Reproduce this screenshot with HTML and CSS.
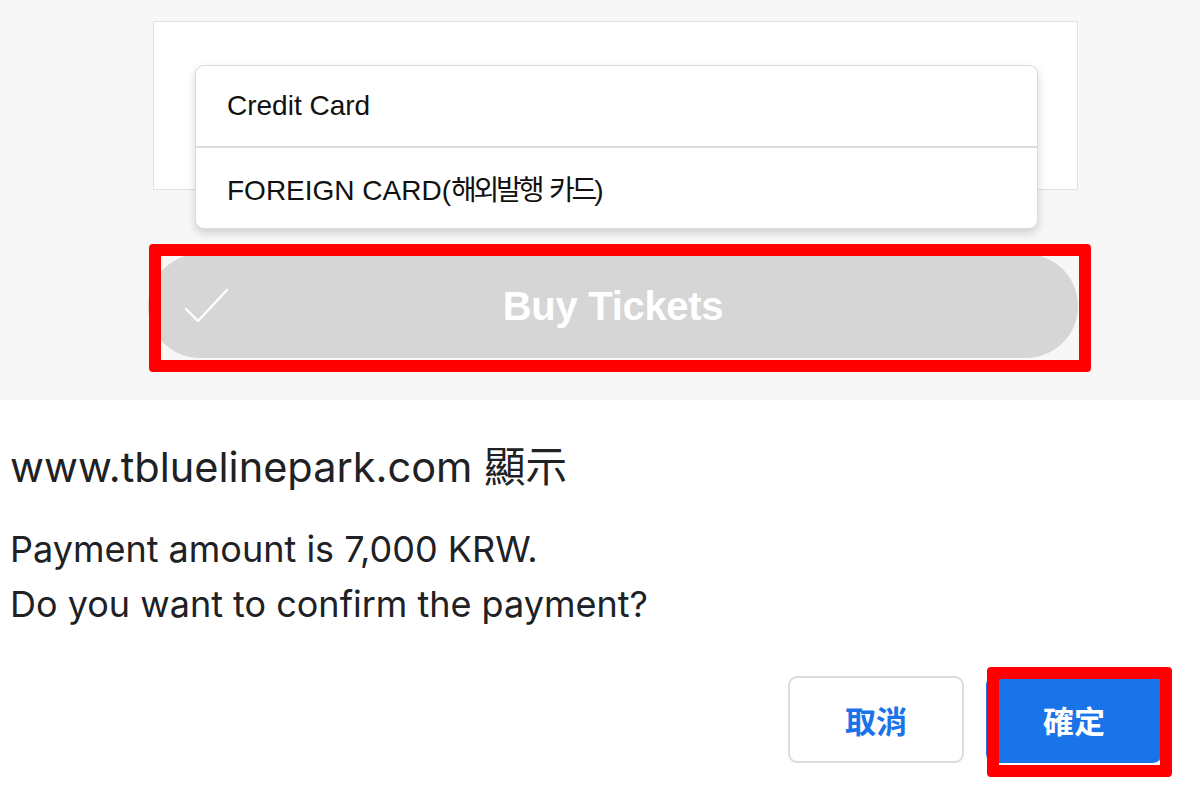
FILE: index.html
```html
<!DOCTYPE html>
<html>
<head>
<meta charset="utf-8">
<link rel="stylesheet" href="styles.css">
</head>
<body>
<section class="top">
  <div class="card">
    <ul class="menu">
      <li class="menu-item"><span>Credit Card</span></li>
      <li class="menu-item"><span>FOREIGN CARD(<span class="ko">해외발행</span> <span class="ko">카드</span>)</span></li>
    </ul>
  </div>
  <div class="buy">
    <svg class="check" width="48" height="40" viewBox="0 0 48 40"><polyline points="3,21 15,33 44,2" fill="none" stroke="#ffffff" stroke-width="2.4" stroke-linecap="round" stroke-linejoin="round"/></svg>
    <span class="buy-label">Buy Tickets</span>
    <div class="mark mark-buy"></div>
  </div>
</section>
<section class="dialog">
  <h1 class="dlg-title">www.tbluelinepark.com 顯示</h1>
  <p class="dlg-msg">Payment amount is 7,000 KRW.<br>Do you want to confirm the payment?</p>
  <div class="dlg-actions">
    <button class="btn btn-cancel">取消</button>
    <button class="btn btn-ok">確定<span class="mark mark-ok"></span></button>
  </div>
</section>
</body>
</html>
```
FILE: styles.css
```css
html, body {
  margin: 0;
  padding: 0;
  background: #ffffff;
}
body {
  width: 1200px;
  height: 800px;
  overflow: hidden;
  font-family: "Liberation Sans", Arial, "Noto Sans CJK KR", sans-serif;
}
.top {
  background: #f7f7f7;
  height: 400px;
  box-sizing: border-box;
  padding-top: 21px;
}
.card {
  position: relative;
  margin-left: 153px;
  width: 925px;
  height: 169px;
  box-sizing: border-box;
  background: #ffffff;
  border: 1px solid #e2e2e2;
}
.menu {
  position: absolute;
  left: 41px;
  top: 43px;
  width: 843px;
  margin: 0;
  padding: 0;
  list-style: none;
  background: #ffffff;
  border: 1px solid #dcdcdc;
  border-radius: 9px;
  box-shadow: 0 4px 10px rgba(0, 0, 0, 0.16);
  box-sizing: border-box;
  z-index: 2;
}
.menu-item {
  height: 80px;
  display: flex;
  align-items: center;
  padding-left: 31px;
  font-size: 28px;
  color: #111111;
  font-family: "Liberation Sans", Arial, "Noto Sans CJK KR", sans-serif;
}
.menu-item + .menu-item {
  border-top: 2px solid #dcdcdc;
}
.ko {
  letter-spacing: -3.2px;
}
.buy {
  position: relative;
  margin-top: 64px;
  margin-left: 148px;
  width: 930px;
  height: 104px;
  border-radius: 52px;
  background: #d6d6d6;
  display: flex;
  align-items: center;
  justify-content: center;
}
.check {
  position: absolute;
  left: 35px;
  top: 34px;
}
.buy-label {
  color: #ffffff;
  font-weight: bold;
  font-size: 40px;
  letter-spacing: -0.3px;
  font-family: "Liberation Sans", Arial, sans-serif;
}
.mark {
  position: absolute;
  box-sizing: border-box;
  border: 12px solid #ff0000;
  border-radius: 4px;
  pointer-events: none;
}
.mark-buy {
  left: 1px;
  top: -10px;
  width: 942px;
  height: 128px;
}
.dialog {
  padding: 44px 38px 0 10px;
  font-family: Inter, "Noto Sans CJK TC", sans-serif;
  color: #202124;
}
.dlg-title {
  margin: 0;
  font-size: 41.5px;
  font-weight: normal;
  line-height: 46px;
  font-family: Inter, "Noto Sans CJK TC", sans-serif;
}
.dlg-msg {
  margin: 32px 0 0;
  font-size: 36px;
  line-height: 55px;
}
.dlg-actions {
  margin-top: 44px;
  display: flex;
  justify-content: flex-end;
  gap: 22px;
}
.btn {
  position: relative;
  width: 176px;
  height: 87px;
  border-radius: 9px;
  font-family: "Noto Sans CJK TC", sans-serif;
  font-weight: bold;
  font-size: 31px;
  padding: 0;
  cursor: pointer;
}
.btn-cancel {
  background: #ffffff;
  border: 2px solid #dadce0;
  color: #1a73e8;
}
.btn-ok {
  background: #1a73e8;
  border: none;
  color: #ffffff;
}
.mark-ok {
  left: 1px;
  top: -9px;
  width: 185px;
  height: 110px;
}
```
